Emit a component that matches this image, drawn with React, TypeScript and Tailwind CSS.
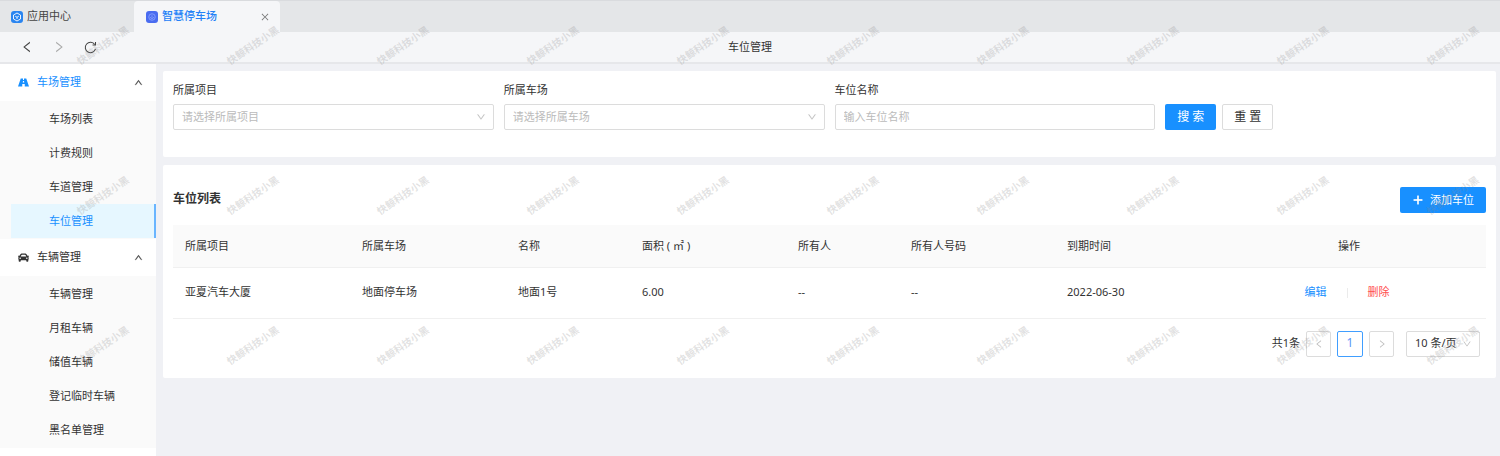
import { useState } from "react";
import clsx from "clsx";
import {
  AiOutlineClose,
  AiOutlineDown,
  AiOutlineLeft,
  AiOutlinePlus,
  AiOutlineRight,
  AiOutlineUp,
} from "react-icons/ai";
import { FaCar } from "react-icons/fa";

function RoadIcon({ size }: { size: number }) {
  return (
    <svg viewBox="0 0 22 22" width={size} height={size} fill="currentColor">
      <path d="M5.500 3H10v3h2V3h4.500L22 19h-8.500v-5h-5v5H0zM10 8l-.5 3h3L12 8z" fillRule="evenodd" />
    </svg>
  );
}

const menus = [
  {
    title: "车场管理",
    icon: RoadIcon,
    items: ["车场列表", "计费规则", "车道管理", "车位管理"],
  },
  {
    title: "车辆管理",
    icon: FaCar,
    items: ["车辆管理", "月租车辆", "储值车辆", "登记临时车辆", "黑名单管理"],
  },
];

const columns = [
  { title: "所属项目", width: "w-[177px]" },
  { title: "所属车场", width: "w-[156px]" },
  { title: "名称", width: "w-[124px]" },
  { title: "面积 ( ㎡ )", width: "w-[156px]" },
  { title: "所有人", width: "w-[113px]" },
  { title: "所有人号码", width: "w-[156px]" },
  { title: "到期时间", width: "w-[157px]" },
];

const rows = [["亚夏汽车大厦", "地面停车场", "地面1号", "6.00", "--", "--", "2022-06-30"]];

function Watermark() {
  return (
    <div className="pointer-events-none absolute inset-0 z-10 overflow-hidden" aria-hidden="true">
      <div className="-mt-[30px] ml-7">
        {[0, 1, 2].map((row) => (
          <div key={row} className="flex">
            {Array.from({ length: 10 }, (_, col) => (
              <div key={col} className="flex size-[150px] shrink-0 items-center justify-center">
                <span className="-rotate-[34deg] text-[10px] font-bold whitespace-nowrap text-[#888]/25">
                  快鲸科技小黑
                </span>
              </div>
            ))}
          </div>
        ))}
      </div>
    </div>
  );
}

function TabBar() {
  return (
    <div className="flex h-8 border-t border-[#d9dbde] bg-[#e4e6e8]">
      <a href="#apps" className="flex w-[134px] items-center gap-1 pl-[11px] text-[#444]">
        <svg viewBox="0 0 24 24" className="size-3">
          <rect width="24" height="24" rx="6" fill="#2a85f0" />
          <g fill="none" stroke="#fff" strokeWidth="1.8" strokeLinejoin="round">
            <path d="M12 4l7 4v8l-7 4-7-4V8z" />
            <path d="M8.500 10.500l3.500 2 3.500-2M12 12.500v3.500" />
          </g>
        </svg>
        应用中心
      </a>
      <div className="flex w-[146px] items-center rounded-t bg-[#f5f6f8] pr-2.5 pl-3">
        <a href="#parking" className="flex flex-1 items-center gap-1 font-medium text-[#2381f7]">
          <svg viewBox="0 0 24 24" className="size-3">
            <rect width="24" height="24" rx="6" fill="#4a6cf0" />
            <g fill="none" stroke="#8fa6ff" strokeWidth="1.6">
              <circle cx="12" cy="12" r="6.500" />
              <path d="M12 8.500v4M9 12a3 3 0 0 0 6 0" />
            </g>
          </svg>
          智慧停车场
        </a>
        <button type="button" aria-label="关闭" className="text-[#777]">
          <AiOutlineClose size={10} />
        </button>
      </div>
    </div>
  );
}

function Toolbar() {
  return (
    <div className="flex h-8 items-center border-b-2 border-[#e6e7ea] bg-[#f5f6f8]">
      <div className="flex w-1/2 items-center gap-[18px] pl-5 text-[#444]">
        <button type="button" aria-label="后退">
          <AiOutlineLeft size={14} />
        </button>
        <button type="button" aria-label="前进" className="text-[#aaa]">
          <AiOutlineRight size={14} />
        </button>
        <button type="button" aria-label="刷新">
          <svg
            viewBox="0 0 14 14"
            width={13}
            height={13}
            fill="none"
            stroke="currentColor"
            strokeWidth="1.1"
          >
            <path d="M12.400 8.500A5.600 5.600 0 1 1 11.600 3.800" />
            <path d="M12.400 1.200v3.200H9.200" />
          </svg>
        </button>
      </div>
      <h1 className="-translate-x-1/2">车位管理</h1>
    </div>
  );
}

function Sidebar() {
  const [active, setActive] = useState("0-3");
  const activeGroup = Number(active.split("-")[0]);

  return (
    <nav className="w-[156px] shrink-0 bg-white">
      {menus.map(({ title, icon: Icon, items }, group) => (
        <div key={title}>
          <button
            type="button"
            className={clsx(
              "flex h-[37px] w-full items-center gap-2 pr-[13px] pl-[18px]",
              group === activeGroup && "text-[#1890ff]"
            )}
          >
            <Icon size={11} />
            <span className="flex-1 text-left">{title}</span>
            <AiOutlineUp size={9} className="text-[#444]" stroke="currentColor" strokeWidth={40} />
          </button>
          <ul className="bg-[#fafafa] py-px pl-[11px]">
            {items.map((item, index) => {
              const key = `${group}-${index}`;
              return (
                <li key={item}>
                  <a
                    href={`#${key}`}
                    onClick={() => setActive(key)}
                    className={clsx(
                      "flex h-[34px] items-center border-r-2 pl-[38px]",
                      key === active
                        ? "border-[#69b5ff] bg-[#e6f7ff] text-[#1890ff]"
                        : "border-transparent"
                    )}
                  >
                    {item}
                  </a>
                </li>
              );
            })}
          </ul>
        </div>
      ))}
    </nav>
  );
}

function SelectField({ id, label, placeholder }: { id: string; label: string; placeholder: string }) {
  return (
    <div>
      <label htmlFor={id} className="block leading-4">
        {label}
      </label>
      <div className="relative mt-1.5">
        <select
          id={id}
          className="h-[26px] w-full appearance-none rounded-xs border border-[#dcdcdc] bg-white px-2 text-[#bbb]"
        >
          <option>{placeholder}</option>
        </select>
        <AiOutlineDown
          size={10}
          className="pointer-events-none absolute top-2 right-2 text-[#bbb]"
          stroke="currentColor"
          strokeWidth={20}
        />
      </div>
    </div>
  );
}

function SearchCard() {
  return (
    <form
      className="grid grid-cols-4 items-end gap-2.5 rounded-xs bg-white px-2.5 pt-[11px] pb-[27px]"
      onSubmit={(e) => e.preventDefault()}
    >
      <SelectField id="project" label="所属项目" placeholder="请选择所属项目" />
      <SelectField id="parking" label="所属车场" placeholder="请选择所属车场" />
      <div>
        <label htmlFor="space" className="block leading-4">
          车位名称
        </label>
        <input
          id="space"
          placeholder="输入车位名称"
          className="mt-1.5 block h-[26px] w-full rounded-xs border border-[#dcdcdc] px-2 pb-0.5 placeholder:text-[#bbb]"
        />
      </div>
      <div className="flex gap-1.5">
        <button type="submit" className="h-[26px] w-[51px] rounded-xs bg-[#1890ff] text-xs text-white">
          搜 索
        </button>
        <button type="reset" className="h-[26px] w-[51px] rounded-xs border border-[#dcdcdc] bg-white text-xs">
          重 置
        </button>
      </div>
    </form>
  );
}

function Pagination() {
  return (
    <div className="mt-3 flex items-center justify-end gap-1.5 pr-1.5">
      <span>共1条</span>
      <button
        type="button"
        aria-label="上一页"
        className="flex h-[26px] w-[25px] items-center justify-center rounded-xs border border-[#dcdcdc] text-[#bbb]"
      >
        <AiOutlineLeft size={10} />
      </button>
      <button
        type="button"
        className="h-[26px] w-[26px] rounded-xs border border-[#409eff] pb-0.5 text-xs text-[#5a96f8]"
      >
        1
      </button>
      <button
        type="button"
        aria-label="下一页"
        className="flex h-[26px] w-[25px] items-center justify-center rounded-xs border border-[#dcdcdc] text-[#bbb]"
      >
        <AiOutlineRight size={10} />
      </button>
      <div className="relative ml-1.5">
        <select
          aria-label="每页条数"
          className="h-[26px] w-[74px] appearance-none rounded-xs border border-[#dcdcdc] bg-white pl-2"
        >
          <option>10 条/页</option>
          <option>20 条/页</option>
        </select>
        <AiOutlineDown size={10} className="pointer-events-none absolute top-2 right-2 text-[#bbb]" />
      </div>
    </div>
  );
}

function ListCard() {
  return (
    <section className="mt-2 rounded-xs bg-white px-2.5 pt-[22px] pb-[21px]">
      <div className="flex items-center justify-between">
        <h2 className="pb-0.5 text-xs font-bold">车位列表</h2>
        <button
          type="button"
          className="flex h-[26px] items-center gap-1.5 rounded-xs bg-[#1890ff] px-3 text-white"
        >
          <AiOutlinePlus size={12} strokeWidth={60} stroke="currentColor" />
          添加车位
        </button>
      </div>
      <table className="mt-3 w-full table-fixed text-left">
        <thead>
          <tr className="h-[42px] border-b border-[#f0f0f0] bg-[#fafafa]">
            {columns.map((col) => (
              <th key={col.title} className={clsx("pl-3 font-normal", col.width)}>
                {col.title}
              </th>
            ))}
            <th className="w-[274px] text-center font-normal">操作</th>
          </tr>
        </thead>
        <tbody>
          {rows.map((row) => (
            <tr key={row[0]} className="h-[51px] border-b border-[#f0f0f0]">
              {row.map((cell, i) => (
                <td key={i} className="pl-3">
                  {cell}
                </td>
              ))}
              <td className="pr-1">
                <div className="flex items-center justify-center gap-5">
                  <a href="#edit" className="text-[#1890ff]">
                    编辑
                  </a>
                  <span className="h-2.5 w-px bg-[#ebebeb]" />
                  <a href="#delete" className="text-[#ff4d4f]">
                    删除
                  </a>
                </div>
              </td>
            </tr>
          ))}
        </tbody>
      </table>
      <Pagination />
    </section>
  );
}

export default function App() {
  return (
    <div className="relative flex min-h-screen flex-col bg-[#f0f1f5] font-['Noto_Sans','Noto_Sans_CJK_SC',sans-serif] text-[11px] text-[#333]">
      <TabBar />
      <Toolbar />
      <div className="flex flex-1">
        <Sidebar />
        <main className="min-w-0 flex-1 py-[7px] pr-1 pl-[7px]">
          <SearchCard />
          <ListCard />
        </main>
      </div>
      <Watermark />
    </div>
  );
}
